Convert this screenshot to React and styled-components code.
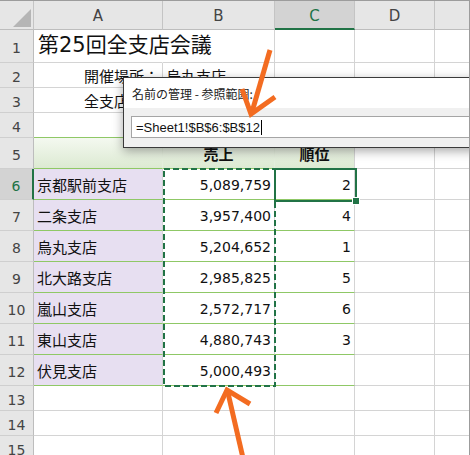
import React from "react";
import styled, { createGlobalStyle } from "styled-components";

const GRID = "#d4d4d4";
const TABLE = "#8fc866";
const XL = "#217346";
const ORANGE = "#f36c21";

const GlobalStyle = createGlobalStyle`
  html, body {
    margin: 0;
    padding: 0;
    background: #fff;
    overflow: hidden;
  }
  body {
    font-family: "DejaVu Sans", "Noto Sans CJK JP", sans-serif;
  }
`;

const Frame = styled.div`
  position: relative;
  width: 470px;
  height: 455px;
  box-sizing: border-box;
  border-top: 1px solid #9c9c9c;
  border-right: 1px solid #9c9c9c;
  overflow: hidden;
  background: #fff;
`;

const Sheet = styled.div`
  display: grid;
  grid-template-columns: 34px 129px 112px 80px 80px 80px;
  grid-template-rows: 29px 33px 25px 25px 25px 31px repeat(7, 31px) repeat(3, 25px);
`;

const Corner = styled.div`
  position: relative;
  background: #e6e6e6;
  border-right: 1px solid #c4c4c4;
  border-bottom: 1px solid #bdbdbd;
  box-sizing: border-box;
  &::after {
    content: "";
    position: absolute;
    right: 2px;
    bottom: 2px;
    width: 0;
    height: 0;
    border-left: 18px solid transparent;
    border-bottom: 18px solid #b5b5b5;
  }
`;

const ColHead = styled.div`
  display: flex;
  align-items: center;
  justify-content: center;
  box-sizing: border-box;
  background: ${(p) => (p.$active ? "#d3d3d3" : "#e6e6e6")};
  color: ${(p) => (p.$active ? XL : "#444")};
  border-right: 1px solid #c4c4c4;
  border-bottom: ${(p) => (p.$active ? `2px solid ${XL}` : "1px solid #bdbdbd")};
  font-size: 15px;
  padding-top: 2px;
`;

const RowHead = styled.div`
  display: flex;
  align-items: center;
  justify-content: center;
  box-sizing: border-box;
  background: ${(p) => (p.$active ? "#d3d3d3" : "#e6e6e6")};
  color: ${(p) => (p.$active ? XL : "#444")};
  border-right: ${(p) => (p.$active ? `2px solid ${XL}` : "1px solid #bdbdbd")};
  border-bottom: 1px solid #cfcfcf;
  font-size: 14px;
  padding-top: 3px;
`;

const Cell = styled.div`
  display: flex;
  align-items: ${(p) => (p.$bottom ? "flex-end" : "center")};
  justify-content: ${(p) =>
    p.$align === "right" ? "flex-end" : p.$align === "center" ? "center" : "flex-start"};
  box-sizing: border-box;
  padding: ${(p) => (p.$bottom ? "0 3px 4px 4px" : "1px 3px 0 3px")};
  background: ${(p) => p.$bg || "transparent"};
  border-right: 1px solid ${(p) => p.$lineR || GRID};
  border-bottom: 1px solid ${(p) => p.$lineB || GRID};
  font-size: ${(p) => p.$size || 14}px;
  font-weight: ${(p) => (p.$bold ? 700 : 400)};
  color: #111;
  white-space: nowrap;
  overflow: visible;
`;

const Ants = styled.svg`
  position: absolute;
  left: 163px;
  top: 167px;
  width: 114px;
  height: 220px;
  pointer-events: none;
`;

const Selection = styled.div`
  position: absolute;
  left: 274px;
  top: 167px;
  width: 83px;
  height: 34px;
  box-sizing: border-box;
  border: 2px solid ${XL};
  pointer-events: none;
`;

const FillHandle = styled.div`
  position: absolute;
  left: 352px;
  top: 196px;
  width: 6px;
  height: 6px;
  background: ${XL};
  border: 1px solid #fff;
`;

const Dialog = styled.div`
  position: absolute;
  left: 123px;
  top: 76px;
  width: 360px;
  box-sizing: border-box;
  border: 1px solid #3a3a3a;
  background: #f0f0f0;
  box-shadow: 0 3px 10px rgba(0, 0, 0, 0.35);
  display: flex;
  flex-direction: column;
`;

const DialogTitle = styled.div`
  height: 30px;
  background: #fff;
  display: flex;
  align-items: center;
  padding-left: 8px;
  padding-top: 1px;
  box-sizing: border-box;
  font-family: "Noto Sans CJK JP", sans-serif;
  font-size: 12px;
  color: #222;
`;

const DialogBody = styled.div`
  padding: 8px 0 9px 7px;
`;

const RefInput = styled.div`
  height: 22px;
  box-sizing: border-box;
  border: 1px solid #a5a5a5;
  background: #fff;
  display: flex;
  align-items: center;
  padding-left: 4px;
  font-family: "Liberation Sans", Arial, sans-serif;
  font-size: 13px;
  color: #111;
`;

const Caret = styled.span`
  display: inline-block;
  width: 1px;
  height: 15px;
  background: #000;
  margin-left: 1px;
`;

const Arrows = styled.svg`
  position: absolute;
  left: 0;
  top: -1px;
  width: 470px;
  height: 456px;
  pointer-events: none;
`;

const data = [
  ["京都駅前支店", "5,089,759", "2"],
  ["二条支店", "3,957,400", "4"],
  ["烏丸支店", "5,204,652", "1"],
  ["北大路支店", "2,985,825", "5"],
  ["嵐山支店", "2,572,717", "6"],
  ["東山支店", "4,880,743", "3"],
  ["伏見支店", "5,000,493", ""],
];

const HEAD_BG = "linear-gradient(to bottom, #f4f9f0, #dcead2)";
const PURPLE = "#e7dff1";

function Row({ n, active, children }) {
  return (
    <>
      <RowHead $active={active}>{n}</RowHead>
      {children}
    </>
  );
}

export default function App() {
  return (
    <>
      <GlobalStyle />
      <Frame>
        <Sheet>
          <Corner />
          {["A", "B", "C", "D", ""].map((c, i) => (
            <ColHead key={i} $active={c === "C"}>
              {c}
            </ColHead>
          ))}

          <Row n="1">
            <Cell $bottom $size={21} $lineR="transparent">
              第25回全支店会議
            </Cell>
            <Cell />
            <Cell />
            <Cell />
            <Cell />
          </Row>

          <Row n="2">
            <Cell $align="right" $size={15}>開催場所：</Cell>
            <Cell $size={15}>烏丸支店</Cell>
            <Cell />
            <Cell />
            <Cell />
          </Row>

          <Row n="3">
            <Cell $align="right" $size={15}>全支店数：</Cell>
            <Cell $size={15}>7店舗</Cell>
            <Cell />
            <Cell />
            <Cell />
          </Row>

          <Row n="4">
            <Cell $lineB={TABLE} />
            <Cell $lineB={TABLE} />
            <Cell $lineB={TABLE} />
            <Cell />
            <Cell />
          </Row>

          <Row n="5">
            <Cell $bg={HEAD_BG} $lineB={TABLE} $lineR="#e4eedd" />
            <Cell $bg={HEAD_BG} $lineB={TABLE} $lineR="#e4eedd" $align="center" $size={15} $bold>
              売上
            </Cell>
            <Cell $bg={HEAD_BG} $lineB={TABLE} $align="center" $size={15} $bold>
              順位
            </Cell>
            <Cell />
            <Cell />
          </Row>

          {data.map(([name, sales, rank], i) => (
            <Row key={name} n={String(i + 6)} active={i === 0}>
              <Cell $bg={PURPLE} $lineB={TABLE} $size={15}>
                {name}
              </Cell>
              <Cell $lineB={TABLE} $align="right">
                {sales}
              </Cell>
              <Cell $lineB={TABLE} $align="right">
                {rank}
              </Cell>
              <Cell />
              <Cell />
            </Row>
          ))}

          {[13, 14, 15].map((n) => (
            <Row key={n} n={String(n)}>
              <Cell />
              <Cell />
              <Cell />
              <Cell />
              <Cell />
            </Row>
          ))}
        </Sheet>

        <Ants viewBox="0 0 114 220">
          <rect
            x="1"
            y="1"
            width="111"
            height="217"
            fill="none"
            stroke={XL}
            strokeWidth="2"
            strokeDasharray="6 3"
          />
        </Ants>

        <Selection />
        <FillHandle />

        <Dialog>
          <DialogTitle>名前の管理 - 参照範囲:</DialogTitle>
          <DialogBody>
            <RefInput>
              =Sheet1!$B$6:$B$12
              <Caret />
            </RefInput>
          </DialogBody>
        </Dialog>

        <Arrows viewBox="0 0 470 456">
          <g fill="none" stroke={ORANGE} strokeWidth="5" strokeLinejoin="miter">
            <line x1="270" y1="50" x2="252" y2="112" />
            <polyline points="242,89 251,114 275,97" />
            <line x1="243" y1="458" x2="228" y2="393" />
            <polyline points="216,413 227,390 250,404" />
          </g>
        </Arrows>
      </Frame>
    </>
  );
}
